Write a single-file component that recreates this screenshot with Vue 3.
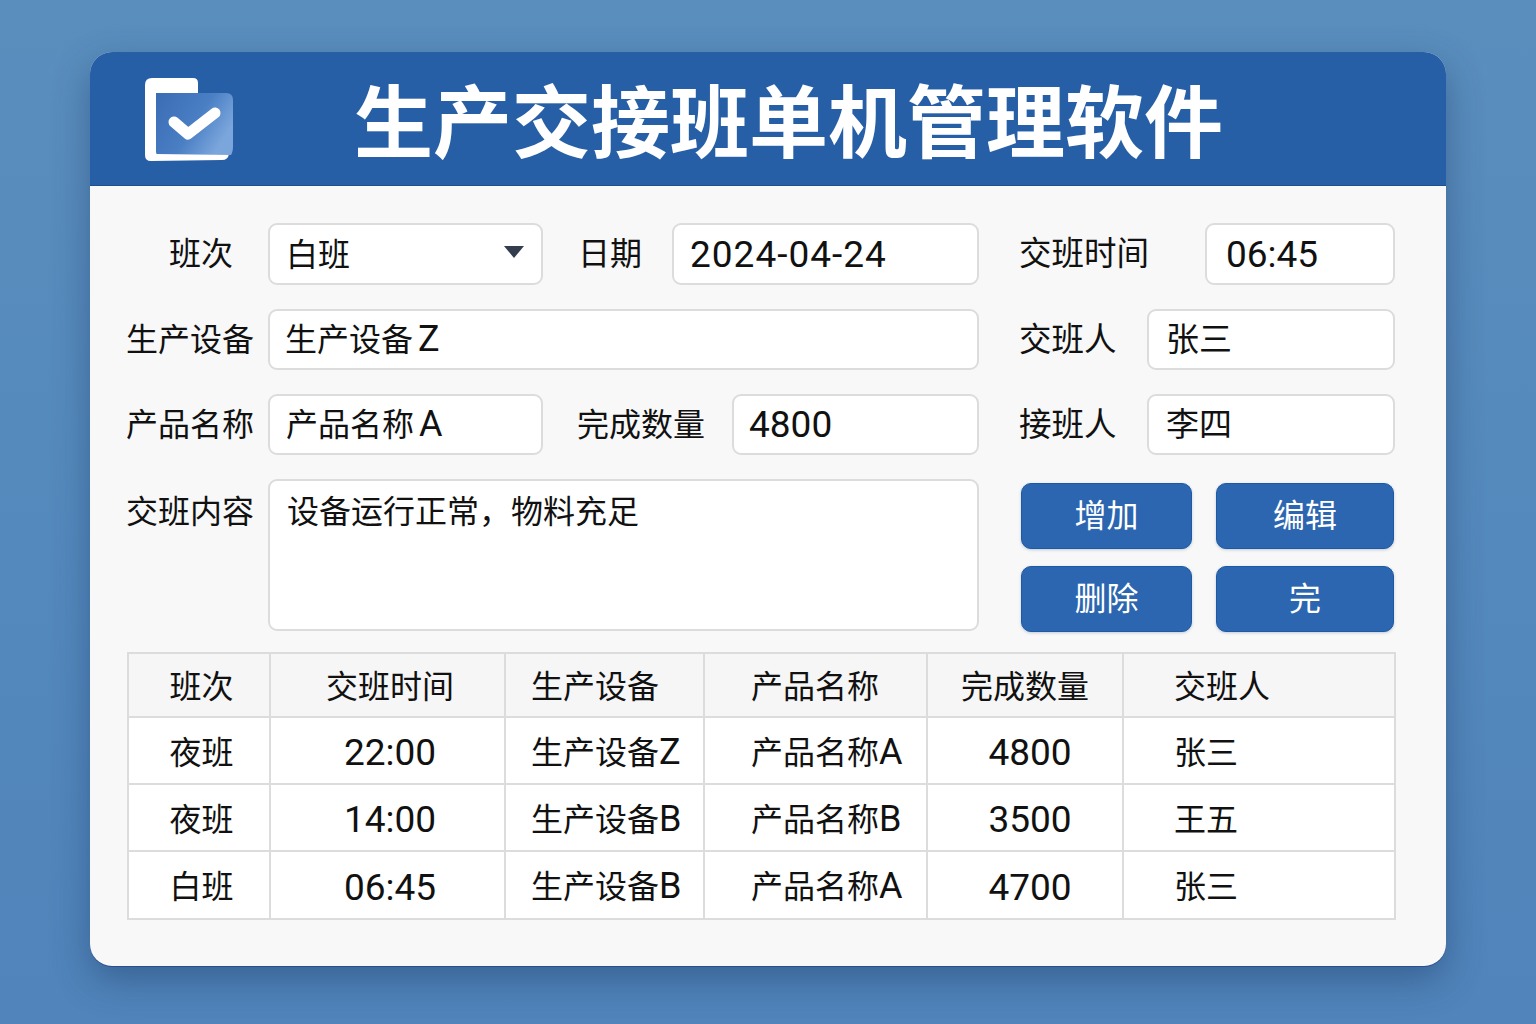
<script setup>
const headers = ['班次', '交班时间', '生产设备', '产品名称', '完成数量', '交班人']
const rows = [
  ['夜班', '22:00', '生产设备Z', '产品名称A', '4800', '张三'],
  ['夜班', '14:00', '生产设备B', '产品名称B', '3500', '王五'],
  ['白班', '06:45', '生产设备B', '产品名称A', '4700', '张三'],
]

// 设备和产品列末尾的字母比汉字显得大一点，单独包一层
function hasLetter(c) {
  return c === 2 || c === 3
}
</script>

<template>
  <div class="page">
    <div class="card">
      <header class="top">
        <svg class="logo" width="90" height="84" viewBox="0 0 90 84">
          <defs>
            <linearGradient id="fold" x1="0" y1="0" x2="1" y2="0.5">
              <stop offset="0" stop-color="#3a6cb4" />
              <stop offset="0.6" stop-color="#4a7fc4" />
              <stop offset="1" stop-color="#7ba6dc" />
            </linearGradient>
          </defs>
          <path d="M7 0H48Q53 0 53 5V20H84V76Q83 82 77 82L6 83Q0 83 0 77V7Q0 0 7 0Z" fill="#fff" />
          <path d="M11 15H81Q88 15 88 22V68Q88 74 86 77L12 76Q11 76 11 74Z" fill="url(#fold)" />
          <path d="M29 44L43 56L70 35" fill="none" stroke="#fff" stroke-width="11" stroke-linecap="round" stroke-linejoin="round" />
        </svg>
        <h1>生产交接班单机管理软件</h1>
      </header>

      <div class="body">
        <div class="form">
          <div class="form-left">
            <div class="row">
              <label class="lbl lbl-center">班次</label>
              <div class="field select">
                <span>白班</span>
                <i class="caret"></i>
              </div>
              <label class="lbl date-lbl">日期</label>
              <div class="field date">2024-04-24</div>
            </div>
            <div class="row">
              <label class="lbl">生产设备</label>
              <div class="field grow device">生产设备<span class="latin gap">Z</span></div>
            </div>
            <div class="row">
              <label class="lbl">产品名称</label>
              <div class="field product">产品名称<span class="latin gap">A</span></div>
              <label class="lbl qty-lbl">完成数量</label>
              <div class="field qty">4800</div>
            </div>
            <div class="row row-top">
              <label class="lbl area-lbl">交班内容</label>
              <div class="field grow area">设备运行正常，物料充足</div>
            </div>
          </div>

          <div class="form-right">
            <div class="row">
              <label class="lbl time-lbl">交班时间</label>
              <div class="field time">06:45</div>
            </div>
            <div class="row">
              <label class="lbl person-lbl">交班人</label>
              <div class="field grow person">张三</div>
            </div>
            <div class="row">
              <label class="lbl person-lbl">接班人</label>
              <div class="field grow person">李四</div>
            </div>
            <div class="btns">
              <button>增加</button>
              <button>编辑</button>
              <button>删除</button>
              <button>完</button>
            </div>
          </div>
        </div>

        <table class="list">
          <colgroup>
            <col style="width: 142px" />
            <col style="width: 235px" />
            <col style="width: 199px" />
            <col style="width: 223px" />
            <col style="width: 196px" />
            <col style="width: 272px" />
          </colgroup>
          <thead>
            <tr>
              <th v-for="(h, i) in headers" :key="h" :class="'c' + i">{{ h }}</th>
            </tr>
          </thead>
          <tbody>
            <tr v-for="(row, r) in rows" :key="r">
              <td v-for="(cell, c) in row" :key="c" :class="'c' + c">
                <template v-if="hasLetter(c)">{{ cell.slice(0, -1) }}<span class="latin">{{ cell.slice(-1) }}</span></template>
                <template v-else>{{ cell }}</template>
              </td>
            </tr>
          </tbody>
        </table>
      </div>
    </div>
  </div>
</template>

<style>
html, body {
  margin: 0;
  background: #5589bd;
}
</style>

<style scoped>
.page {
  width: 1536px;
  height: 1024px;
  box-sizing: border-box;
  padding: 52px 90px 58px;
  background: linear-gradient(180deg, #5a8ebd 0%, #5489bd 55%, #5084ba 100%);
  font-family: Roboto, "Noto Sans CJK SC", sans-serif;
  color: #111;
  overflow: hidden;
}

.card {
  height: 914px;
  border-radius: 22px;
  background: #f8f8f8;
  overflow: hidden;
  box-shadow: 0 1px 0 #2a4f8f, 0 14px 36px rgba(25, 50, 95, 0.42);
}

.top {
  height: 134px;
  background: #265fa6;
  border-bottom: 1px solid #1d4f90;
  box-sizing: border-box;
  display: flex;
  align-items: center;
  padding-left: 55px;
}

.logo {
  flex: none;
  margin-top: 2px;
}

.top h1 {
  margin: 0 0 3px 119px;
  font-family: "Noto Sans CJK SC", sans-serif;
  font-size: 79px;
  line-height: 1;
  font-weight: 700;
  color: #fff;
  white-space: nowrap;
}

.body {
  padding: 37px 51px 0 37px;
}

.form {
  display: flex;
  gap: 42px;
}

.form-left {
  width: 852px;
  flex: none;
  display: flex;
  flex-direction: column;
  gap: 24px;
}

.form-right {
  width: 374px;
  flex: none;
  display: flex;
  flex-direction: column;
  gap: 24px;
}

.row {
  display: flex;
  align-items: center;
  height: 61px;
}

.row:first-child {
  height: 62px;
}

.row:first-child .field {
  height: 62px;
  line-height: 60px;
}

.row-top {
  height: 152px;
  align-items: flex-start;
}

.lbl {
  flex: none;
  width: 141px;
  font-size: 32px;
  line-height: 62px;
  white-space: nowrap;
  text-indent: -1px;
}

.lbl-center {
  padding-left: 43px;
  box-sizing: border-box;
}

.area-lbl {
  line-height: 66px;
}

.date-lbl {
  width: auto;
  margin: 0 30px 0 36px;
}

.qty-lbl {
  width: auto;
  margin: 0 27px 0 35px;
}

.time-lbl {
  width: 185px;
  margin-left: -1px;
  font-size: 32.5px;
}

.person-lbl {
  width: 127px;
  margin-left: -1px;
  font-size: 32.5px;
}

.field {
  box-sizing: border-box;
  height: 61px;
  background: #fff;
  border: 2px solid #dcdcdc;
  border-radius: 9px;
  font-size: 32px;
  line-height: 58px;
  padding: 0 16px;
  white-space: nowrap;
}

.latin {
  font-size: 36px;
  line-height: 1;
}

.gap {
  margin-left: 5px;
}

.grow {
  flex: 1;
}

.person {
  font-size: 33px;
  padding-left: 17px;
}

.select {
  width: 275px;
  display: flex;
  align-items: center;
  justify-content: space-between;
  padding-top: 2px;
  padding-right: 17px;
}

.caret {
  width: 0;
  height: 0;
  border-left: 10px solid transparent;
  border-right: 10px solid transparent;
  border-top: 12px solid #333d4d;
  margin-bottom: 6px;
}

.date {
  flex: 1;
  padding-left: 16px;
  font-size: 37px;
  letter-spacing: 1px;
}

.device {
  padding-left: 15px;
}

.product {
  width: 275px;
}

.qty {
  flex: 1;
  font-size: 37px;
  padding-left: 15px;
}

.time {
  flex: 1;
  font-size: 37px;
  padding-left: 19px;
}

.area {
  height: 152px;
  line-height: 62px;
  padding-left: 17px;
}

.btns {
  display: grid;
  grid-template-columns: 171px 178px;
  grid-auto-rows: 66px;
  gap: 17px 24px;
  padding-top: 4px;
}

.btns button {
  margin: 0;
  padding: 0 0 6px;
  border: 1px solid #1d5aa5;
  border-radius: 10px;
  background: #2d66b0;
  color: #fff;
  font-family: inherit;
  font-size: 32px;
  box-shadow: 0 1px 3px rgba(30, 60, 110, 0.25);
}

.list {
  width: 1267px;
  margin-top: 20px;
  border-collapse: collapse;
  table-layout: fixed;
  border: 2px solid #dcdcdc;
  background: #fff;
}

.list th,
.list td {
  padding: 0 0 2px;
  border: 2px solid #dcdcdc;
  text-align: center;
  font-weight: 400;
  font-size: 32px;
  white-space: nowrap;
}

.list th {
  height: 60px;
  background: #f6f6f6;
}

.list td {
  height: 63px;
}

.list tr:last-child td {
  height: 64px;
}

.list td.c1,
.list td.c4 {
  font-size: 37px;
  height: 61px;
  padding: 4px 0 0;
}

.list tr:last-child td.c1,
.list tr:last-child td.c4 {
  height: 62px;
}

.list .c0,
.list .c1 {
  padding-left: 5px;
}

.list td.c1 {
  padding-left: 5px;
}

.list td.c4 {
  padding-left: 10px;
}

.list .c2 {
  text-align: left;
  padding-left: 25px;
}

.list .c3 {
  text-align: left;
  padding-left: 46px;
}

.list .c5 {
  text-align: left;
  padding-left: 50px;
}
</style>
